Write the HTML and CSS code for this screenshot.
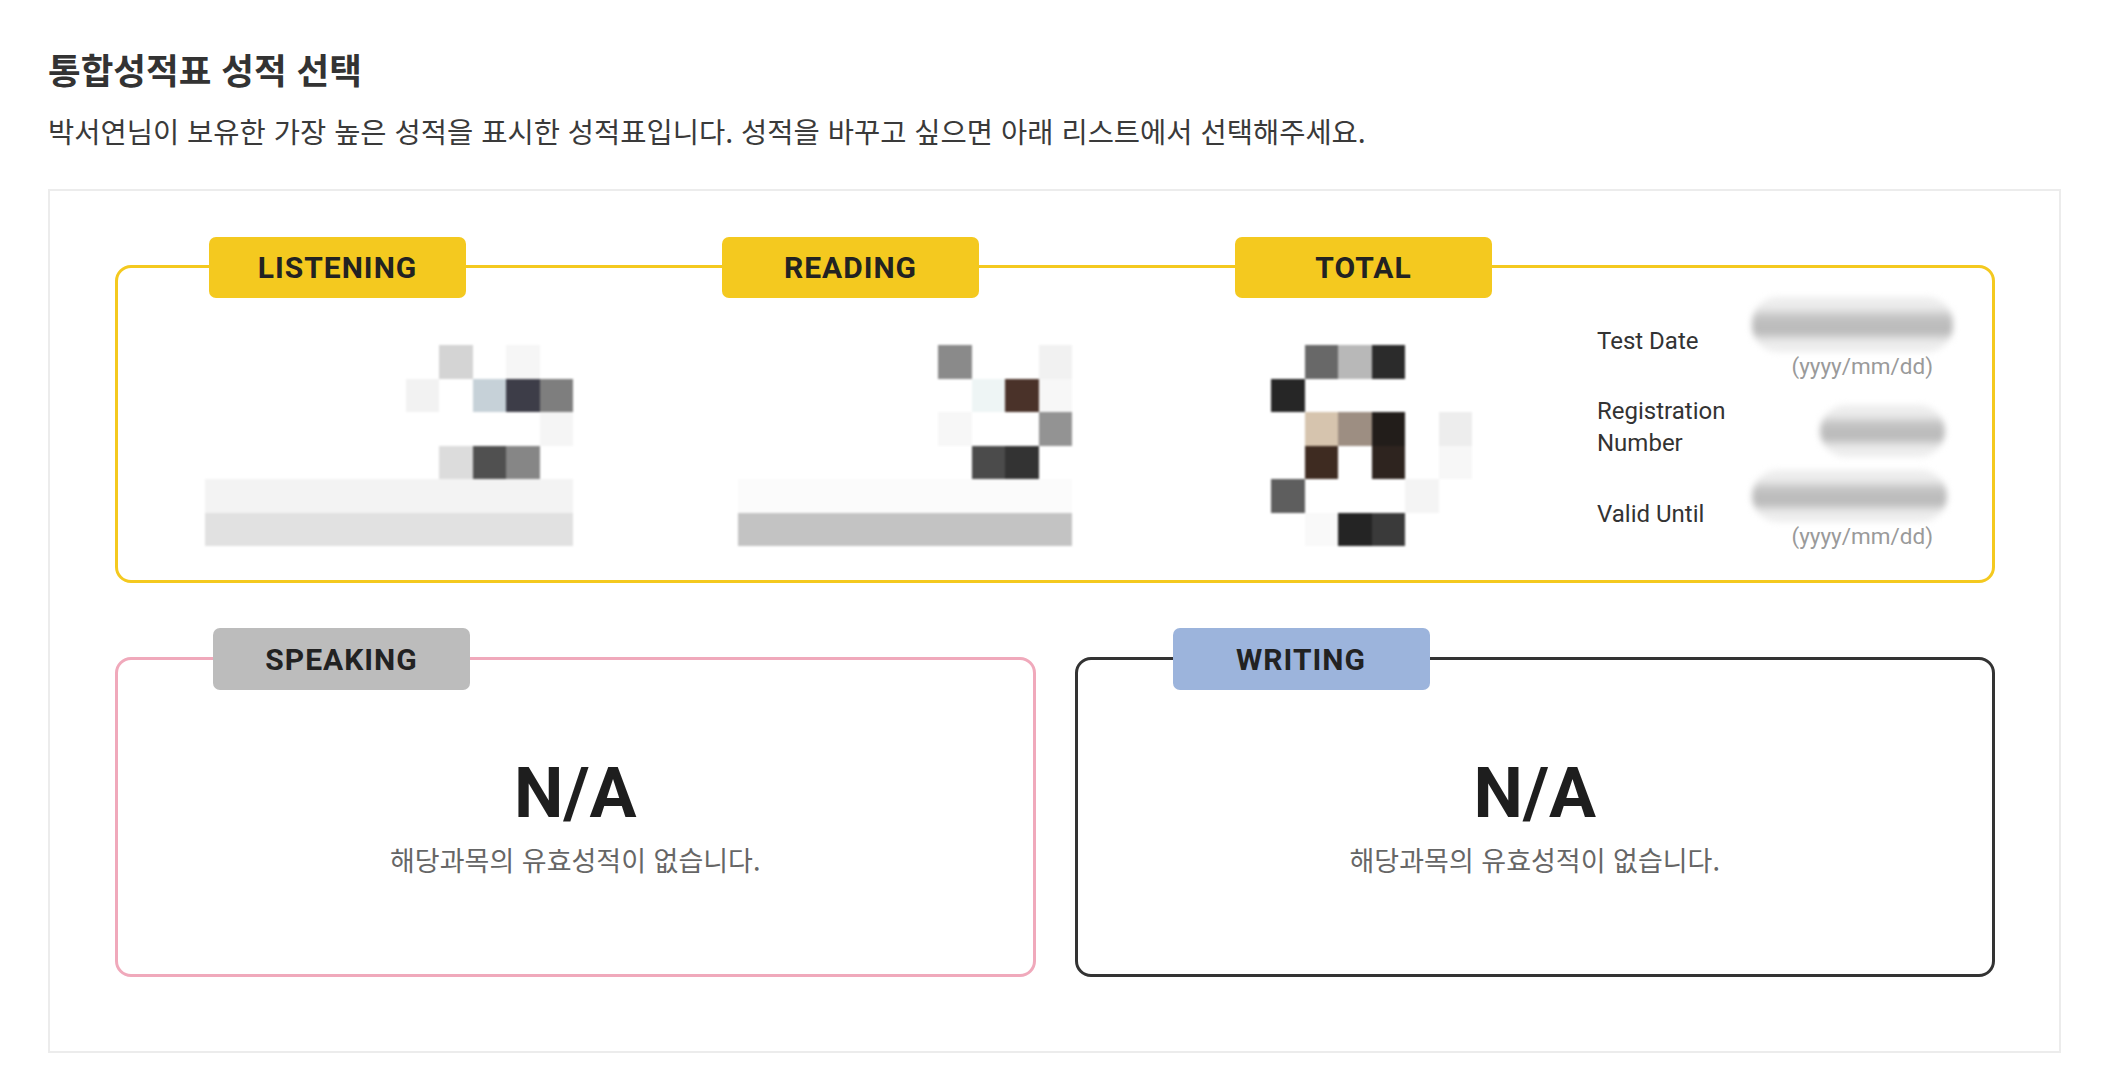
FILE: index.html
```html
<!DOCTYPE html>
<html lang="ko">
<head>
<meta charset="utf-8">
<title>통합성적표 성적 선택</title>
<link rel="stylesheet" href="styles.css">
</head>
<body>
<div class="page">
  <h1 class="title">통합성적표 성적 선택</h1>
  <p class="desc">박서연님이 보유한 가장 높은 성적을 표시한 성적표입니다. 성적을 바꾸고 싶으면 아래 리스트에서 선택해주세요.</p>

  <div class="panel">
    <div class="card card-main">
      <div class="score-col">
        <div class="tag tag-yellow">LISTENING</div>
        <svg class="mosaic mosaic-l" width="368" height="201" viewBox="0 0 11 6" preserveAspectRatio="none" shape-rendering="crispEdges">
          <rect x="7" y="0" width="1" height="1" fill="#d4d4d4"/>
          <rect x="9" y="0" width="1" height="1" fill="#f6f6f6"/>
          <rect x="6" y="1" width="1" height="1" fill="#f2f2f2"/>
          <rect x="8" y="1" width="1" height="1" fill="#c6d1d8"/>
          <rect x="9" y="1" width="1" height="1" fill="#3d3d48"/>
          <rect x="10" y="1" width="1" height="1" fill="#7e7e7e"/>
          <rect x="10" y="2" width="1" height="1" fill="#f5f5f5"/>
          <rect x="7" y="3" width="1" height="1" fill="#dcdcdc"/>
          <rect x="8" y="3" width="1" height="1" fill="#505050"/>
          <rect x="9" y="3" width="1" height="1" fill="#868686"/>
          <rect x="0" y="4" width="11" height="1" fill="#f3f3f3"/>
          <rect x="0" y="5" width="11" height="1" fill="#e1e1e1"/>
        </svg>
      </div>
      <div class="score-col">
        <div class="tag tag-yellow">READING</div>
        <svg class="mosaic mosaic-r" width="334" height="201" viewBox="0 0 10 6" preserveAspectRatio="none" shape-rendering="crispEdges">
          <rect x="6" y="0" width="1" height="1" fill="#8a8a8a"/>
          <rect x="9" y="0" width="1" height="1" fill="#f1f1f1"/>
          <rect x="7" y="1" width="1" height="1" fill="#eef5f5"/>
          <rect x="8" y="1" width="1" height="1" fill="#4a3229"/>
          <rect x="9" y="1" width="1" height="1" fill="#f7f7f7"/>
          <rect x="6" y="2" width="1" height="1" fill="#f7f7f7"/>
          <rect x="9" y="2" width="1" height="1" fill="#939393"/>
          <rect x="7" y="3" width="1" height="1" fill="#4b4b4b"/>
          <rect x="8" y="3" width="1" height="1" fill="#333333"/>
          <rect x="0" y="4" width="10" height="1" fill="#fbfbfb"/>
          <rect x="0" y="5" width="10" height="1" fill="#c3c3c3"/>
        </svg>
      </div>
      <div class="score-col score-col-total">
        <div class="tag tag-yellow">TOTAL</div>
        <svg class="mosaic mosaic-t" width="235" height="201" viewBox="0 0 7 6" preserveAspectRatio="none" shape-rendering="crispEdges">
          <rect x="1" y="0" width="1" height="1" fill="#686868"/>
          <rect x="2" y="0" width="1" height="1" fill="#b8b8b8"/>
          <rect x="3" y="0" width="1" height="1" fill="#2b2b2b"/>
          <rect x="0" y="1" width="1" height="1" fill="#262626"/>
          <rect x="1" y="2" width="1" height="1" fill="#d6c4ae"/>
          <rect x="2" y="2" width="1" height="1" fill="#9d8e82"/>
          <rect x="3" y="2" width="1" height="1" fill="#221d1a"/>
          <rect x="5" y="2" width="1" height="1" fill="#ededed"/>
          <rect x="1" y="3" width="1" height="1" fill="#3e2b21"/>
          <rect x="3" y="3" width="1" height="1" fill="#2e241f"/>
          <rect x="5" y="3" width="1" height="1" fill="#f7f7f7"/>
          <rect x="0" y="4" width="1" height="1" fill="#5e5e5e"/>
          <rect x="4" y="4" width="1" height="1" fill="#f4f4f4"/>
          <rect x="1" y="5" width="1" height="1" fill="#f9f9f9"/>
          <rect x="2" y="5" width="1" height="1" fill="#242424"/>
          <rect x="3" y="5" width="1" height="1" fill="#3a3a3a"/>
        </svg>
      </div>
      <div class="info">
        <div class="info-row info-row-date">
          <div class="info-label">Test Date</div>
          <div class="info-value">
            <div class="blur-pill pill-date"></div>
            <div class="fmt">(yyyy/mm/dd)</div>
          </div>
        </div>
        <div class="info-row info-row-reg">
          <div class="info-label">Registration Number</div>
          <div class="info-value">
            <div class="blur-pill pill-reg"></div>
          </div>
        </div>
        <div class="info-row info-row-valid">
          <div class="info-label">Valid Until</div>
          <div class="info-value">
            <div class="blur-pill pill-valid"></div>
            <div class="fmt fmt-valid">(yyyy/mm/dd)</div>
          </div>
        </div>
      </div>
    </div>

    <div class="sub-cards">
      <div class="card sub-card card-speaking">
        <div class="tag tag-sub tag-gray">SPEAKING</div>
        <div class="na">N/A</div>
        <div class="na-msg">해당과목의 유효성적이 없습니다.</div>
      </div>
      <div class="card sub-card card-writing">
        <div class="tag tag-sub tag-blue">WRITING</div>
        <div class="na">N/A</div>
        <div class="na-msg">해당과목의 유효성적이 없습니다.</div>
      </div>
    </div>
  </div>
</div>
</body>
</html>
```

FILE: styles.css
```css
* { box-sizing: border-box; }

body {
  margin: 0;
  background: #ffffff;
  font-family: Roboto, "Noto Sans CJK KR", sans-serif;
  color: #333333;
}

.page {
  width: 2013px;
  margin-left: 48px;
  padding-top: 47px;
}

.title {
  margin: 0;
  font-family: "Noto Sans CJK KR", sans-serif;
  font-size: 35.5px;
  line-height: 44px;
  font-weight: 700;
  color: #333333;
}

.desc {
  margin: 22px 0 0;
  font-family: "Noto Sans CJK KR", sans-serif;
  font-size: 28.5px;
  line-height: 36px;
  font-weight: 400;
  color: #3a3a3a;
}

.panel {
  margin-top: 40px;
  border: 2px solid #ececec;
  padding: 74px 64px 74px 65px;
}

.card {
  border: 3px solid #333333;
  border-radius: 16px;
  background: #ffffff;
}

.card-main {
  border-color: #f4c91f;
  display: flex;
  padding: 0 39px 33px 91px;
}

.score-col {
  width: 513px;
  flex: none;
}

.score-col-total {
  width: 362px;
}

.tag {
  width: 257px;
  height: 61px;
  margin-top: -31px;
  border-radius: 7px;
  display: flex;
  align-items: center;
  justify-content: center;
  font-family: Roboto, sans-serif;
  font-weight: 700;
  font-size: 30px;
  letter-spacing: 1px;
  color: #222222;
}

.tag-yellow { background: #f4c91f; }
.tag-gray { background: #bcbcbc; }
.tag-blue { background: #9cb4dc; }

.mosaic {
  display: block;
  margin-top: 47px;
  filter: blur(0.8px);
}

.mosaic-l { margin-left: -4px; }
.mosaic-r { margin-left: 16px; }
.mosaic-t { margin-left: 36px; }

.info {
  width: 356px;
  flex: none;
  padding-top: 29px;
  display: flex;
  flex-direction: column;
}

.info-row {
  display: flex;
  justify-content: space-between;
  align-items: flex-start;
}

.info-label {
  width: 150px;
  font-family: Roboto, sans-serif;
  font-size: 24px;
  line-height: 32px;
  color: #333333;
}

.info-row-date .info-label { margin-top: 28px; }
.info-row-reg { margin-top: 18px; }
.info-row-valid { margin-top: 11px; }
.info-row-valid .info-label { margin-top: 28px; }

.info-value {
  display: flex;
  flex-direction: column;
  align-items: flex-end;
}

.blur-pill {
  border-radius: 26px;
  background:
    linear-gradient(180deg, rgba(255,255,255,0) 18%, rgba(160,160,160,0.55) 38%, rgba(150,150,150,0.6) 62%, rgba(255,255,255,0) 82%),
    #ededed;
  filter: blur(3px);
}

.pill-date { width: 201px; height: 55px; }
.pill-reg { width: 125px; height: 52px; margin-top: 10px; margin-right: 8px; }
.pill-valid { width: 195px; height: 52px; margin-right: 6px; }

.fmt {
  margin-top: 3px;
  margin-right: 20px;
  font-family: Roboto, sans-serif;
  font-size: 22.5px;
  line-height: 22px;
  color: #9a9a9a;
}

.fmt-valid { margin-top: 3px; margin-right: 20px; }

.sub-cards {
  display: flex;
  gap: 39px;
  margin-top: 74px;
}

.sub-card {
  flex: 1;
  display: flex;
  flex-direction: column;
  align-items: center;
  padding-bottom: 97px;
}

.card-speaking { border-color: #f0a9bb; }
.card-writing { border-color: #333333; }

.tag-sub {
  align-self: flex-start;
  height: 62px;
  margin-top: -32px;
  margin-left: 95px;
}

.na {
  margin-top: 62px;
  font-family: Roboto, sans-serif;
  font-weight: 700;
  font-size: 70px;
  line-height: 82px;
  color: #1e1e1e;
}

.na-msg {
  margin-top: 9px;
  font-family: "Noto Sans CJK KR", sans-serif;
  font-size: 27px;
  line-height: 34px;
  color: #666666;
}
```
